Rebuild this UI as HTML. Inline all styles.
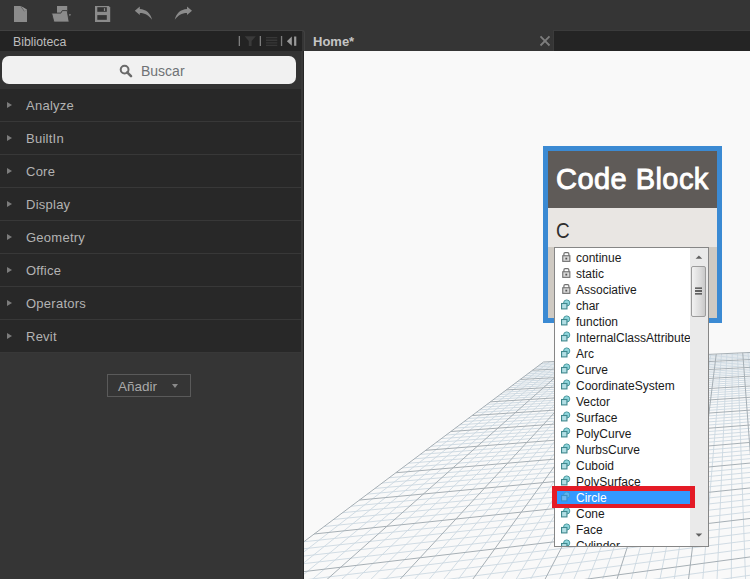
<!DOCTYPE html>
<html><head><meta charset="utf-8">
<style>
*{box-sizing:border-box;margin:0;padding:0}
html,body{width:750px;height:579px;overflow:hidden;background:#353535;font-family:"Liberation Sans",sans-serif}
.abs{position:absolute}
#top{left:0;top:0;width:750px;height:30px;background:#353535}
#lib{left:0;top:30px;width:305px;height:549px;background:#353535;border-top:1px solid #414141;border-right:1px solid #414141;border-top-right-radius:3px}
#libhdr{left:0;top:31px;width:302px;height:20px;background:#232323}
#libhdr .t{position:absolute;left:13px;top:4px;font-size:12.3px;color:#bdbdbd}
#searcharea{left:0;top:51px;width:302px;height:38px;background:#333}
#search{left:2px;top:56px;width:294px;height:28px;background:#f1f1f1;border-radius:7px}
#search .t{position:absolute;left:139px;top:7px;font-size:14px;color:#6f7275}
#cats{left:0;top:89px;width:301px;height:264px;background:#282828}
.cat{position:absolute;left:0;width:301px;height:33px;border-bottom:1px solid #383838}
.cat .t{position:absolute;left:26px;top:9px;font-size:13px;color:#b3b3b3;letter-spacing:0.25px}
.cat .tri{position:absolute;left:7px;top:13px;width:0;height:0;border-left:5px solid #7c7c7c;border-top:3px solid transparent;border-bottom:3px solid transparent}
#gap{left:301px;top:51px;width:2px;height:528px;background:#393939}
#gap2{left:303px;top:51px;width:1px;height:528px;background:#262626}
#canvas{left:304px;top:51px;width:446px;height:528px;background:#f9f9f9;overflow:hidden}
#tab{left:305px;top:30px;width:249px;height:21px;background:#353535}
#tab .t{position:absolute;left:8px;top:4px;font-size:13px;font-weight:bold;color:#c5c5c5}
#tabrest{left:553px;top:30px;width:197px;height:21px;background:#242424;border-top:1px solid #3b3b3b;border-left:1px solid #3b3b3b}
#add{left:107px;top:374px;width:84px;height:23px;border:1px solid #5a5a5a}
#add .t{position:absolute;left:10px;top:4px;font-size:13.5px;color:#a9a9a9}
#add .tri{position:absolute;left:64px;top:9px;width:0;height:0;border-top:4px solid #8a8a8a;border-left:3px solid transparent;border-right:3px solid transparent}

#node{left:543px;top:146px;width:179px;height:177px;background:#3b8ad3}
#nhdr{left:548px;top:151px;width:169px;height:57px;background:#5f5b58}
#nhdr .t{position:absolute;left:8px;top:12px;font-size:29px;font-weight:normal;color:#fff;letter-spacing:0.45px;-webkit-text-stroke:0.9px #fff}
#nbody{left:548px;top:208px;width:169px;height:39px;background:#e9e6e3}
#nbody .t{position:absolute;left:8px;top:10px;font-size:22px;color:#2e2e2e;transform:scaleX(0.86);transform-origin:0 0}
#nstrip{left:548px;top:247px;width:169px;height:71px;background:#cfcac3}
#list{left:554px;top:247px;width:155px;height:300px;background:#fff;border:1px solid #868686;overflow:hidden}
.it{position:absolute;left:0;width:135px;height:16px;font-size:12px;line-height:16px;color:#1a1a1a;white-space:nowrap}
.it .t{position:absolute;left:21px;top:0}
.it svg{position:absolute;left:6px;top:2px;overflow:visible}
#sel{left:555px;top:490px;width:135px;height:16px;background:#3399ff}
#sb{left:690px;top:248px;width:18px;height:298px;background:#eaeaea}
#thumb{left:691px;top:266px;width:15px;height:51px;border:1px solid #9c9c9c;border-radius:2px;background:linear-gradient(90deg,#f2f2f2,#dcdcdc 60%,#c9c9c9)}
#red{left:552px;top:486px;width:143px;height:22px;border:5px solid #e41b26;border-bottom-width:4.5px}
</style></head><body>
<div id="top" class="abs"></div>
<div id="lib" class="abs"></div><svg class="abs" style="left:0;top:0" width="300" height="30">
<path d="M14 6H20.4L27 10V22H14Z" fill="#8b8b8b"/>
<path d="M20.4 6.2L24.2 11.4L25.4 10.6L27 10Z" fill="#5a5a5a"/>
<path d="M21.2 6.3L27 9.6L24.6 10.9Z" fill="#959595"/>
<rect x="57" y="6" width="10.2" height="7" fill="#8b8b8b"/>
<path d="M51.6 13.1H60.8L62.3 10.6H67.2L69.2 22.1H53.9Z" fill="#8b8b8b" stroke="#353535" stroke-width="0.9"/>
<path d="M68.8 14.2H71L69.9 16.2Z" fill="#8b8b8b"/>
<path d="M95 6H108.8L110.2 7.4V22H95Z" fill="#8b8b8b"/>
<rect x="97.3" y="7.2" width="9.5" height="4.6" fill="#353535"/>
<rect x="103.9" y="8.2" width="1.2" height="2.8" fill="#8b8b8b"/>
<rect x="97.3" y="15.1" width="9.5" height="4.7" fill="#353535"/>
<path d="M134.8 10.8L139.8 6.6V9.0C146 9.2 150.8 13.5 152 19.8C149 15.2 145 12.9 139.8 12.9V15Z" fill="#8b8b8b"/>
<path d="M192 10.8L187 6.6V9.0C180.8 9.2 176 13.5 174.8 19.8C177.8 15.2 181.8 12.9 187 12.9V15Z" fill="#8b8b8b"/>
</svg>
<div id="libhdr" class="abs"><span class="t">Biblioteca</span></div>
<div id="searcharea" class="abs"></div><svg class="abs" style="left:230px;top:31px" width="72" height="20">
<rect x="8.7" y="5" width="1.3" height="10" fill="#7e7e7e"/>
<rect x="29.7" y="5" width="1.3" height="10" fill="#7e7e7e"/>
<rect x="50.9" y="5" width="1.3" height="10" fill="#7e7e7e"/>
<path d="M14.6 5.3H25.8L21.6 10V15H18.8V10Z" fill="#3a3a3a"/>
<path d="M36 6h11.3v1.3H36zM36 8.6h11.3v1.3H36zM36 11.2h11.3v1.3H36zM36 13.8h11.3v1.3H36z" fill="#383838"/>
<path d="M56.9 10.2L61.8 5.5V14.8Z" fill="#9a9a9a"/>
<rect x="64.1" y="5.5" width="2.2" height="9.3" fill="#9a9a9a"/>
</svg>
<div id="search" class="abs"><span class="t">Buscar</span></div><svg class="abs" style="left:118px;top:63px" width="16" height="16">
<circle cx="6.6" cy="6.6" r="3.9" fill="none" stroke="#6a6a6a" stroke-width="2"/>
<path d="M9.2 9.4L13 13.2" stroke="#6a6a6a" stroke-width="2.6" stroke-linecap="round"/>
</svg>
<div id="cats" class="abs">
<div class="cat" style="top:0"><i class="tri"></i><span class="t">Analyze</span></div>
<div class="cat" style="top:33px"><i class="tri"></i><span class="t">BuiltIn</span></div>
<div class="cat" style="top:66px"><i class="tri"></i><span class="t">Core</span></div>
<div class="cat" style="top:99px"><i class="tri"></i><span class="t">Display</span></div>
<div class="cat" style="top:132px"><i class="tri"></i><span class="t">Geometry</span></div>
<div class="cat" style="top:165px"><i class="tri"></i><span class="t">Office</span></div>
<div class="cat" style="top:198px"><i class="tri"></i><span class="t">Operators</span></div>
<div class="cat" style="top:231px"><i class="tri"></i><span class="t">Revit</span></div>
</div>
<div id="add" class="abs"><span class="t">Añadir</span><i class="tri"></i></div>
<div id="gap" class="abs"></div>
<div id="gap2" class="abs"></div>
<div id="tab" class="abs"><span class="t">Home*</span></div>
<div id="tabrest" class="abs"></div><svg class="abs" style="left:538px;top:34px" width="14" height="14"><path d="M2.5 2.3L11.5 11.5M11.5 2.3L2.5 11.5" stroke="#7d7d7d" stroke-width="1.8"/></svg>
<div id="canvas" class="abs"><svg width="446" height="528" style="position:absolute;left:0;top:0"><polygon points="239.5,311.0 1301.8,262.0 2076.6,344.5 -633.2,965.5" fill="none"/><path d="M237.40 312.57L1307.28 262.60M235.26 314.18L1312.86 263.19M233.07 315.82L1318.51 263.79M230.83 317.51L1324.23 264.40M226.18 320.99L1335.90 265.65M223.78 322.79L1341.85 266.28M221.32 324.64L1347.87 266.92M218.80 326.53L1353.98 267.57M213.57 330.45L1366.44 268.90M210.85 332.49L1372.80 269.57M208.07 334.57L1379.24 270.26M205.21 336.72L1385.78 270.95M199.27 341.17L1399.12 272.37M196.18 343.49L1405.93 273.10M193.01 345.87L1412.83 273.83M189.75 348.32L1419.84 274.58M182.95 353.42L1434.15 276.10M179.40 356.08L1441.46 276.88M175.74 358.82L1448.88 277.67M171.98 361.64L1456.41 278.47M164.12 367.54L1471.80 280.11M160.00 370.63L1479.68 280.95M155.75 373.81L1487.67 281.80M151.37 377.10L1495.78 282.66M142.16 384.01L1512.39 284.43M137.33 387.63L1520.89 285.34M132.32 391.38L1529.52 286.26M127.15 395.27L1538.29 287.19M116.23 403.45L1556.26 289.10M110.47 407.77L1565.47 290.08M104.50 412.25L1574.82 291.08M98.30 416.91L1584.33 292.09M85.15 426.77L1603.84 294.17M78.17 432.00L1613.84 295.23M70.91 437.45L1624.01 296.31M63.34 443.13L1634.36 297.41M47.19 455.23L1655.60 299.68M38.57 461.70L1666.51 300.84M29.56 468.46L1677.61 302.02M20.11 475.55L1688.91 303.22M-0.19 490.77L1712.14 305.69M-11.11 498.97L1724.08 306.97M-22.61 507.59L1736.24 308.26M-34.72 516.67L1748.63 309.58M-61.01 536.39L1774.14 312.29M-75.30 547.11L1787.26 313.69M-90.45 558.47L1800.65 315.12M-106.54 570.54L1814.30 316.57M-141.92 597.08L1842.43 319.56M-161.42 611.70L1856.93 321.11M-182.30 627.36L1871.73 322.68M-204.72 644.17L1886.84 324.29M-254.87 681.79L1918.03 327.61M-283.04 702.92L1934.13 329.32M-313.64 725.87L1950.58 331.08M-346.99 750.88L1967.40 332.87M-423.56 808.31L2002.17 336.57M-467.80 841.50L2020.15 338.48M-516.90 878.32L2038.55 340.44M-571.68 919.40L2057.38 342.44M245.67 310.72L-586.90 954.94M251.82 310.43L-541.87 944.62M257.93 310.15L-498.05 934.57M264.01 309.87L-455.39 924.79M276.08 309.31L-373.37 906.00M282.08 309.04L-333.93 896.96M288.04 308.76L-295.48 888.15M293.98 308.49L-257.99 879.55M305.76 307.94L-185.73 862.99M311.61 307.67L-150.89 855.01M317.43 307.41L-116.89 847.22M323.22 307.14L-83.67 839.60M334.72 306.61L-19.53 824.90M340.43 306.35L11.46 817.80M346.11 306.08L41.75 810.86M351.77 305.82L71.38 804.07M363.00 305.30L128.70 790.93M368.57 305.05L156.45 784.57M374.12 304.79L183.60 778.35M379.64 304.54L210.19 772.26M390.61 304.03L261.73 760.44M396.06 303.78L286.71 754.72M401.48 303.53L311.19 749.11M406.87 303.28L335.19 743.61M417.59 302.79L381.77 732.93M422.91 302.54L404.39 727.75M428.20 302.30L426.57 722.66M433.47 302.05L448.34 717.68M443.95 301.57L490.65 707.98M449.15 301.33L511.22 703.26M454.32 301.09L531.42 698.64M459.47 300.86L551.25 694.09M469.71 300.38L589.85 685.24M474.79 300.15L608.64 680.94M479.85 299.92L627.10 676.71M484.89 299.68L645.24 672.55M494.89 299.22L680.60 664.44M499.86 298.99L697.83 660.50M504.81 298.77L714.78 656.61M509.74 298.54L731.44 652.79M519.52 298.09L763.95 645.34M524.38 297.86L779.81 641.71M529.22 297.64L795.41 638.13M534.04 297.42L810.77 634.61M543.61 296.98L840.76 627.74M548.37 296.76L855.40 624.38M553.10 296.54L869.82 621.08M557.82 296.32L884.02 617.83M567.18 295.89L911.77 611.47M571.84 295.67L925.33 608.36M576.47 295.46L938.69 605.29M581.08 295.25L951.86 602.28M590.25 294.83L977.61 596.37M594.80 294.62L990.21 593.49M599.34 294.41L1002.63 590.64M603.85 294.20L1014.87 587.84M612.83 293.78L1038.84 582.34M617.28 293.58L1050.57 579.65M621.72 293.37L1062.14 577.00M626.14 293.17L1073.55 574.39M634.93 292.76L1095.91 569.26M639.29 292.56L1106.87 566.75M643.64 292.36L1117.67 564.28M647.97 292.16L1128.34 561.83M656.57 291.77L1149.24 557.04M660.85 291.57L1159.49 554.69M665.11 291.37L1169.61 552.37M669.35 291.18L1179.60 550.08M677.78 290.79L1199.19 545.59M681.96 290.60L1208.80 543.39M686.13 290.40L1218.29 541.22M690.29 290.21L1227.66 539.07M698.55 289.83L1246.06 534.85M702.65 289.64L1255.09 532.78M706.74 289.45L1264.01 530.74M710.81 289.27L1272.82 528.72M718.90 288.89L1290.13 524.75M722.92 288.71L1298.63 522.80M726.92 288.52L1307.03 520.88M730.91 288.34L1315.34 518.97M738.85 287.97L1331.65 515.24M742.79 287.79L1339.67 513.40M746.71 287.61L1347.59 511.58M750.62 287.43L1355.43 509.79M758.40 287.07L1370.83 506.26M762.26 286.89L1378.40 504.52M766.11 286.72L1385.89 502.81M769.95 286.54L1393.29 501.11M777.57 286.19L1407.86 497.77M781.36 286.01L1415.02 496.13M785.14 285.84L1422.11 494.50M788.90 285.66L1429.12 492.90M796.37 285.32L1442.92 489.74M800.09 285.15L1449.70 488.18M803.79 284.98L1456.42 486.64M807.48 284.81L1463.07 485.12M814.81 284.47L1476.15 482.12M818.46 284.30L1482.59 480.64M822.09 284.13L1488.97 479.18M825.71 283.97L1495.28 477.74M832.91 283.63L1507.70 474.89M836.48 283.47L1513.82 473.48M840.05 283.31L1519.88 472.10M843.60 283.14L1525.88 470.72M850.66 282.82L1537.70 468.01M854.17 282.65L1543.52 466.68M857.66 282.49L1549.28 465.36M861.15 282.33L1554.99 464.05M868.08 282.01L1566.25 461.47M871.52 281.85L1571.79 460.20M874.96 281.70L1577.28 458.94M878.38 281.54L1582.72 457.69M885.18 281.22L1593.45 455.24M888.56 281.07L1598.74 454.02M891.93 280.91L1603.98 452.82M895.29 280.76L1609.17 451.63M901.97 280.45L1619.41 449.29M905.29 280.30L1624.45 448.13M908.59 280.14L1629.46 446.98M911.89 279.99L1634.41 445.85M918.45 279.69L1644.19 443.61M921.71 279.54L1649.02 442.50M924.96 279.39L1653.80 441.40M928.20 279.24L1658.54 440.32M934.64 278.94L1667.89 438.18M937.84 278.80L1672.51 437.12M941.03 278.65L1677.08 436.07M944.21 278.50L1681.62 435.03M950.54 278.21L1690.57 432.98M953.68 278.07L1694.99 431.96M956.82 277.92L1699.37 430.96M959.94 277.78L1703.71 429.97M966.16 277.49L1712.29 428.00M969.25 277.35L1716.53 427.03M972.33 277.21L1720.73 426.07M975.40 277.06L1724.89 425.11M981.50 276.78L1733.12 423.23M984.54 276.64L1737.18 422.29M987.57 276.50L1741.21 421.37M990.58 276.36L1745.21 420.45M996.58 276.09L1753.11 418.65M999.57 275.95L1757.01 417.75M1002.54 275.81L1760.88 416.86M1005.51 275.68L1764.72 415.98M1011.40 275.40L1772.30 414.25M1014.34 275.27L1776.05 413.39M1017.26 275.13L1779.77 412.53M1020.17 275.00L1783.46 411.69M1025.97 274.73L1790.75 410.02M1028.86 274.60L1794.36 409.19M1031.73 274.47L1797.93 408.37M1034.60 274.33L1801.48 407.56M1040.30 274.07L1808.50 405.95M1043.13 273.94L1811.97 405.16M1045.96 273.81L1815.41 404.37M1048.77 273.68L1818.82 403.58M1054.38 273.42L1825.58 402.04M1057.17 273.29L1828.92 401.27M1059.95 273.16L1832.24 400.51M1062.72 273.04L1835.53 399.76M1068.23 272.78L1842.04 398.26M1070.97 272.66L1845.26 397.53M1073.70 272.53L1848.45 396.79M1076.43 272.40L1851.62 396.07M1081.85 272.15L1857.90 394.63M1084.55 272.03L1861.00 393.92M1087.23 271.91L1864.09 393.21M1089.91 271.78L1867.15 392.51M1095.25 271.54L1873.20 391.12M1097.90 271.41L1876.20 390.44M1100.55 271.29L1879.17 389.75M1103.18 271.17L1882.12 389.08M1108.43 270.93L1887.97 387.74M1111.04 270.81L1890.86 387.07M1113.64 270.69L1893.74 386.42M1116.24 270.57L1896.59 385.76M1121.40 270.33L1902.23 384.47M1123.97 270.21L1905.03 383.83M1126.53 270.09L1907.80 383.19M1129.08 269.98L1910.56 382.56M1134.16 269.74L1916.02 381.31M1136.69 269.63L1918.72 380.69M1139.21 269.51L1921.40 380.07M1141.72 269.39L1924.07 379.46M1146.72 269.16L1929.35 378.25M1149.21 269.05L1931.96 377.65M1151.69 268.93L1934.56 377.06M1154.17 268.82L1937.14 376.47M1159.09 268.59L1942.24 375.30M1161.54 268.48L1944.77 374.72M1163.98 268.37L1947.29 374.14M1166.41 268.26L1949.78 373.57M1171.26 268.03L1954.73 372.44M1173.67 267.92L1957.18 371.88M1176.07 267.81L1959.61 371.32M1178.47 267.70L1962.03 370.76M1183.24 267.48L1966.82 369.67M1185.62 267.37L1969.19 369.12M1187.98 267.26L1971.55 368.58M1190.34 267.15L1973.89 368.05M1195.04 266.93L1978.53 366.98M1197.38 266.83L1980.83 366.45M1199.71 266.72L1983.12 365.93M1202.04 266.61L1985.39 365.41M1206.66 266.40L1989.89 364.38M1208.96 266.29L1992.12 363.87M1211.26 266.19L1994.34 363.36M1213.55 266.08L1996.54 362.85M1218.11 265.87L2000.90 361.85M1220.37 265.77L2003.07 361.36M1222.64 265.66L2005.22 360.87M1224.89 265.56L2007.36 360.38M1229.38 265.35L2011.59 359.40M1231.61 265.25L2013.69 358.92M1233.84 265.15L2015.78 358.44M1236.06 265.04L2017.86 357.97M1240.49 264.84L2021.97 357.03M1242.69 264.74L2024.01 356.56M1244.88 264.64L2026.04 356.09M1247.07 264.54L2028.05 355.63M1251.43 264.33L2032.05 354.72M1253.60 264.23L2034.03 354.26M1255.76 264.13L2036.00 353.81M1257.91 264.04L2037.96 353.36M1262.21 263.84L2041.84 352.47M1264.34 263.74L2043.77 352.03M1266.48 263.64L2045.68 351.59M1268.60 263.54L2047.58 351.16M1272.83 263.35L2051.36 350.29M1274.94 263.25L2053.23 349.86M1277.04 263.15L2055.09 349.44M1279.13 263.06L2056.94 349.01M1283.30 262.86L2060.62 348.17M1285.38 262.77L2062.44 347.75M1287.45 262.67L2064.25 347.34M1289.51 262.58L2066.05 346.92M1293.62 262.39L2069.62 346.11M1295.67 262.29L2071.39 345.70M1297.71 262.20L2073.15 345.30M1299.74 262.11L2074.91 344.89" stroke="#ccd8e1" stroke-width="0.9" fill="none"/><path d="M239.50 311.00L1301.77 262.01M228.53 319.23L1330.03 265.02M216.21 328.46L1360.17 268.23M202.28 338.91L1392.40 271.66M186.39 350.83L1426.94 275.34M168.11 364.55L1464.05 279.29M146.84 380.50L1504.02 283.54M121.79 399.29L1547.21 288.14M91.85 421.74L1594.00 293.12M55.44 449.05L1644.89 298.54M10.21 482.98L1700.42 304.45M-47.50 526.26L1761.26 310.92M-123.67 583.38L1828.22 318.05M-228.84 662.26L1902.27 325.93M-383.47 778.24L1984.59 334.70M-633.20 965.54L2076.65 344.49M239.50 311.00L-633.20 965.54M270.06 309.59L-413.84 915.27M299.88 308.22L-221.41 871.17M328.98 306.87L-51.23 832.17M357.40 305.56L100.35 797.43M385.14 304.28L236.22 766.29M412.24 303.03L358.71 738.22M438.72 301.81L469.69 712.78M464.60 300.62L570.72 689.63M489.90 299.45L663.07 668.46M514.64 298.31L747.83 649.04M538.84 297.20L825.88 631.15M562.51 296.10L898.00 614.62M585.68 295.04L964.83 599.30M608.35 293.99L1026.94 585.07M630.55 292.97L1084.81 571.81M652.28 291.96L1138.86 559.42M673.57 290.98L1189.46 547.82M694.43 290.02L1236.92 536.95M714.86 289.08L1281.53 526.72M734.89 288.15L1323.54 517.09M754.52 287.25L1363.17 508.01M773.77 286.36L1400.62 499.43M792.64 285.49L1436.06 491.31M811.15 284.64L1469.64 483.61M829.31 283.80L1501.52 476.30M847.13 282.98L1531.82 469.36M864.62 282.17L1560.65 462.75M881.78 281.38L1588.11 456.46M898.63 280.60L1614.31 450.45M915.18 279.84L1639.32 444.72M931.42 279.09L1663.24 439.24M947.38 278.36L1686.11 434.00M963.05 277.63L1708.02 428.98M978.45 276.92L1729.02 424.16M993.59 276.22L1749.18 419.55M1008.46 275.54L1768.52 415.11M1023.08 274.86L1787.12 410.85M1037.45 274.20L1805.00 406.75M1051.58 273.55L1822.22 402.81M1065.48 272.91L1838.79 399.01M1079.14 272.28L1854.77 395.35M1092.59 271.66L1870.18 391.81M1105.81 271.05L1885.06 388.40M1118.82 270.45L1899.42 385.11M1131.63 269.86L1913.30 381.93M1144.23 269.28L1926.72 378.86M1156.63 268.71L1939.70 375.88M1168.84 268.14L1952.26 373.00M1180.86 267.59L1964.43 370.21M1192.70 267.04L1976.22 367.51M1204.35 266.51L1987.65 364.89M1215.83 265.98L1998.73 362.35M1227.14 265.45L2009.48 359.89M1238.28 264.94L2019.92 357.50M1249.25 264.43L2030.06 355.17M1260.06 263.94L2039.91 352.92M1270.72 263.44L2049.48 350.72M1281.22 262.96L2058.79 348.59M1291.57 262.48L2067.84 346.51M1301.77 262.01L2076.65 344.49" stroke="#a6afb5" stroke-width="1.0" fill="none"/></svg>
</div><div id="node" class="abs"></div><div id="nhdr" class="abs"><span class="t">Code Block</span></div><div id="nbody" class="abs"><span class="t">C</span></div><div id="nstrip" class="abs"></div><div id="list" class="abs"><div class="abs" style="left:0;top:242px;width:135px;height:16px;background:#3399ff"></div><div class="it" style="top:2px;"><svg width="11" height="11"><path d="M2.9 3.7V2Q2.9 0.7 4.2 0.7H6.6Q7.9 0.7 7.9 2V3.7" fill="none" stroke="#707070" stroke-width="1.2"/><rect x="1.75" y="3.75" width="7.1" height="5.6" fill="#d8d8d8" stroke="#6e6e6e" stroke-width="1.1"/><rect x="4.4" y="5.7" width="1.8" height="1.8" fill="#555"/></svg><span class="t">continue</span></div><div class="it" style="top:18px;"><svg width="11" height="11"><path d="M2.9 3.7V2Q2.9 0.7 4.2 0.7H6.6Q7.9 0.7 7.9 2V3.7" fill="none" stroke="#707070" stroke-width="1.2"/><rect x="1.75" y="3.75" width="7.1" height="5.6" fill="#d8d8d8" stroke="#6e6e6e" stroke-width="1.1"/><rect x="4.4" y="5.7" width="1.8" height="1.8" fill="#555"/></svg><span class="t">static</span></div><div class="it" style="top:34px;"><svg width="11" height="11"><path d="M2.9 3.7V2Q2.9 0.7 4.2 0.7H6.6Q7.9 0.7 7.9 2V3.7" fill="none" stroke="#707070" stroke-width="1.2"/><rect x="1.75" y="3.75" width="7.1" height="5.6" fill="#d8d8d8" stroke="#6e6e6e" stroke-width="1.1"/><rect x="4.4" y="5.7" width="1.8" height="1.8" fill="#555"/></svg><span class="t">Associative</span></div><div class="it" style="top:50px;"><svg width="11" height="11"><circle cx="5.7" cy="3.0" r="3.1" fill="#8fd6dd" stroke="#4b9aa0" stroke-width="1"/><rect x="0.55" y="3.5" width="5.4" height="5.4" fill="#b3dfe5" stroke="#3f888d" stroke-width="1.1"/></svg><span class="t">char</span></div><div class="it" style="top:66px;"><svg width="11" height="11"><circle cx="5.7" cy="3.0" r="3.1" fill="#8fd6dd" stroke="#4b9aa0" stroke-width="1"/><rect x="0.55" y="3.5" width="5.4" height="5.4" fill="#b3dfe5" stroke="#3f888d" stroke-width="1.1"/></svg><span class="t">function</span></div><div class="it" style="top:82px;"><svg width="11" height="11"><circle cx="5.7" cy="3.0" r="3.1" fill="#8fd6dd" stroke="#4b9aa0" stroke-width="1"/><rect x="0.55" y="3.5" width="5.4" height="5.4" fill="#b3dfe5" stroke="#3f888d" stroke-width="1.1"/></svg><span class="t">InternalClassAttribute</span></div><div class="it" style="top:98px;"><svg width="11" height="11"><circle cx="5.7" cy="3.0" r="3.1" fill="#8fd6dd" stroke="#4b9aa0" stroke-width="1"/><rect x="0.55" y="3.5" width="5.4" height="5.4" fill="#b3dfe5" stroke="#3f888d" stroke-width="1.1"/></svg><span class="t">Arc</span></div><div class="it" style="top:114px;"><svg width="11" height="11"><circle cx="5.7" cy="3.0" r="3.1" fill="#8fd6dd" stroke="#4b9aa0" stroke-width="1"/><rect x="0.55" y="3.5" width="5.4" height="5.4" fill="#b3dfe5" stroke="#3f888d" stroke-width="1.1"/></svg><span class="t">Curve</span></div><div class="it" style="top:130px;"><svg width="11" height="11"><circle cx="5.7" cy="3.0" r="3.1" fill="#8fd6dd" stroke="#4b9aa0" stroke-width="1"/><rect x="0.55" y="3.5" width="5.4" height="5.4" fill="#b3dfe5" stroke="#3f888d" stroke-width="1.1"/></svg><span class="t">CoordinateSystem</span></div><div class="it" style="top:146px;"><svg width="11" height="11"><circle cx="5.7" cy="3.0" r="3.1" fill="#8fd6dd" stroke="#4b9aa0" stroke-width="1"/><rect x="0.55" y="3.5" width="5.4" height="5.4" fill="#b3dfe5" stroke="#3f888d" stroke-width="1.1"/></svg><span class="t">Vector</span></div><div class="it" style="top:162px;"><svg width="11" height="11"><circle cx="5.7" cy="3.0" r="3.1" fill="#8fd6dd" stroke="#4b9aa0" stroke-width="1"/><rect x="0.55" y="3.5" width="5.4" height="5.4" fill="#b3dfe5" stroke="#3f888d" stroke-width="1.1"/></svg><span class="t">Surface</span></div><div class="it" style="top:178px;"><svg width="11" height="11"><circle cx="5.7" cy="3.0" r="3.1" fill="#8fd6dd" stroke="#4b9aa0" stroke-width="1"/><rect x="0.55" y="3.5" width="5.4" height="5.4" fill="#b3dfe5" stroke="#3f888d" stroke-width="1.1"/></svg><span class="t">PolyCurve</span></div><div class="it" style="top:194px;"><svg width="11" height="11"><circle cx="5.7" cy="3.0" r="3.1" fill="#8fd6dd" stroke="#4b9aa0" stroke-width="1"/><rect x="0.55" y="3.5" width="5.4" height="5.4" fill="#b3dfe5" stroke="#3f888d" stroke-width="1.1"/></svg><span class="t">NurbsCurve</span></div><div class="it" style="top:210px;"><svg width="11" height="11"><circle cx="5.7" cy="3.0" r="3.1" fill="#8fd6dd" stroke="#4b9aa0" stroke-width="1"/><rect x="0.55" y="3.5" width="5.4" height="5.4" fill="#b3dfe5" stroke="#3f888d" stroke-width="1.1"/></svg><span class="t">Cuboid</span></div><div class="it" style="top:226px;"><svg width="11" height="11"><circle cx="5.7" cy="3.0" r="3.1" fill="#8fd6dd" stroke="#4b9aa0" stroke-width="1"/><rect x="0.55" y="3.5" width="5.4" height="5.4" fill="#b3dfe5" stroke="#3f888d" stroke-width="1.1"/></svg><span class="t">PolySurface</span></div><div class="it" style="top:242px;color:#fff"><svg width="11" height="11" style="opacity:0.45"><circle cx="5.7" cy="3.0" r="3.1" fill="#8fd6dd" stroke="#4b9aa0" stroke-width="1"/><rect x="0.55" y="3.5" width="5.4" height="5.4" fill="#b3dfe5" stroke="#3f888d" stroke-width="1.1"/></svg><span class="t">Circle</span></div><div class="it" style="top:258px;"><svg width="11" height="11"><circle cx="5.7" cy="3.0" r="3.1" fill="#8fd6dd" stroke="#4b9aa0" stroke-width="1"/><rect x="0.55" y="3.5" width="5.4" height="5.4" fill="#b3dfe5" stroke="#3f888d" stroke-width="1.1"/></svg><span class="t">Cone</span></div><div class="it" style="top:274px;"><svg width="11" height="11"><circle cx="5.7" cy="3.0" r="3.1" fill="#8fd6dd" stroke="#4b9aa0" stroke-width="1"/><rect x="0.55" y="3.5" width="5.4" height="5.4" fill="#b3dfe5" stroke="#3f888d" stroke-width="1.1"/></svg><span class="t">Face</span></div><div class="it" style="top:290px;"><svg width="11" height="11"><circle cx="5.7" cy="3.0" r="3.1" fill="#8fd6dd" stroke="#4b9aa0" stroke-width="1"/><rect x="0.55" y="3.5" width="5.4" height="5.4" fill="#b3dfe5" stroke="#3f888d" stroke-width="1.1"/></svg><span class="t">Cylinder</span></div></div><div id="sb" class="abs"></div><svg class="abs" style="left:690px;top:250px" width="18" height="12"><path d="M5.6 8.8L8.9 5.6L12.2 8.8Z" fill="#606060"/></svg><svg class="abs" style="left:690px;top:530px" width="18" height="12"><path d="M5.6 3.5L8.9 6.8L12.2 3.5Z" fill="#606060"/></svg><div id="thumb" class="abs"></div><svg class="abs" style="left:691px;top:286px" width="15" height="10"><path d="M4 2.2h7M4 5h7M4 7.8h7" stroke="#3a3a3a" stroke-width="1.3"/></svg><div id="red" class="abs"></div>
</body></html>
